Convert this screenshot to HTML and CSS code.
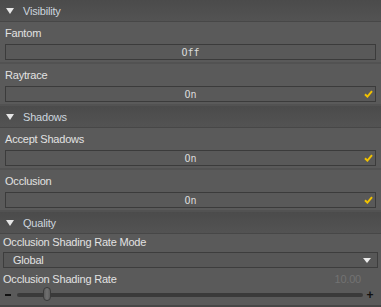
FILE: index.html
```html
<!DOCTYPE html>
<html lang="en">
<head>
    <meta charset="UTF-8">
    <meta name="viewport" content="width=device-width, initial-scale=1.0">
    <title>Surface Properties</title>
    <link rel="stylesheet" href="styles.css">
</head>
<body>
    <div class="panel">
        <div class="group-head"><span class="caret"></span>Visibility</div>
        <div class="prop">
            <div class="prop-label">Fantom</div>
            <div class="toggle">Off</div>
        </div>
        <div class="prop">
            <div class="prop-label">Raytrace</div>
            <div class="toggle">On
                <svg class="check" width="9" height="8" viewBox="0 0 9 8"><path d="M1 4.2 L3.4 6.6 L8 1.2" /></svg>
            </div>
        </div>

        <div class="group-head"><span class="caret"></span>Shadows</div>
        <div class="prop">
            <div class="prop-label">Accept Shadows</div>
            <div class="toggle">On
                <svg class="check" width="9" height="8" viewBox="0 0 9 8"><path d="M1 4.2 L3.4 6.6 L8 1.2" /></svg>
            </div>
        </div>
        <div class="prop">
            <div class="prop-label">Occlusion</div>
            <div class="toggle">On
                <svg class="check" width="9" height="8" viewBox="0 0 9 8"><path d="M1 4.2 L3.4 6.6 L8 1.2" /></svg>
            </div>
        </div>

        <div class="group-head"><span class="caret"></span>Quality</div>
        <div class="quality">
            <div class="prop-label">Occlusion Shading Rate Mode</div>
            <div class="select">Global<span class="select-arrow"></span></div>
            <div class="rate-head">
                <span class="prop-label">Occlusion Shading Rate</span>
                <span class="rate-value">10.00</span>
            </div>
            <div class="slider">
                <span class="minus"></span>
                <div class="track">
                    <div class="thumb"></div>
                </div>
                <span class="plus">+</span>
            </div>
        </div>
    </div>
</body>
</html>
```

FILE: styles.css
```css
/* Base */
body {
    margin: 0;
    background: #5a5a5a;
    font-family: 'Liberation Sans', Arial, sans-serif;
    font-size: 11px;
    letter-spacing: -0.2px;
    color: #e2e2e2;
    overflow: hidden;
}

.panel {
    width: 381px;
    height: 307px;
    display: flex;
    flex-direction: column;
    box-sizing: border-box;
    border-bottom: 2px solid #464646;
}

/* Group headers */
.group-head {
    height: 22px;
    display: flex;
    align-items: center;
    padding-left: 6px;
    background: linear-gradient(#4b4b4b, #535353);
    border-bottom: 1px solid #474747;
    box-sizing: border-box;
    color: #cdd5de;
}

.caret {
    width: 0;
    height: 0;
    border-left: 4px solid transparent;
    border-right: 4px solid transparent;
    border-top: 6px solid #e6e6e6;
    margin-right: 9px;
    margin-top: 1px;
}

/* Property rows */
.prop {
    height: 42px;
    box-sizing: border-box;
    padding: 4px 5px 0;
    border-bottom: 2px solid #525252;
}

.prop-label {
    line-height: 14px;
}

.toggle {
    position: relative;
    margin-top: 4px;
    height: 16px;
    box-sizing: border-box;
    border: 1px solid #3b3b3b;
    background: #595959;
    display: flex;
    align-items: center;
    justify-content: center;
    font-family: 'DejaVu Sans Mono', monospace;
    font-size: 10px;
    letter-spacing: 0;
    color: #dcdcdc;
}

.check {
    position: absolute;
    right: 2px;
    top: 3px;
}

.check path {
    fill: none;
    stroke: #f2c200;
    stroke-width: 2;
}

/* Quality block */
.quality {
    flex: 1;
    padding: 1px 3px 0;
    display: flex;
    flex-direction: column;
}

.select {
    position: relative;
    margin-top: 3px;
    height: 16px;
    box-sizing: border-box;
    border: 1px solid #3d3d3d;
    background: #575757;
    display: flex;
    align-items: center;
    padding-left: 9px;
    color: #e2e2e2;
}

.select-arrow {
    position: absolute;
    right: 6px;
    top: 5px;
    border-left: 4px solid transparent;
    border-right: 4px solid transparent;
    border-top: 5px solid #ececec;
}

.rate-head {
    margin-top: 4px;
    display: flex;
    justify-content: space-between;
    line-height: 14px;
}

.rate-value {
    color: #727272;
    font-size: 11px;
    margin-right: 17px;
}

.slider {
    height: 18px;
    display: flex;
    align-items: center;
}

.minus {
    width: 6px;
    height: 2px;
    background: #111;
    margin-left: 2px;
    margin-right: 6px;
}

.track {
    position: relative;
    flex: 1;
    height: 4px;
    border-radius: 2px;
    background: #3a3a3a;
}

.thumb {
    position: absolute;
    left: 26px;
    top: -6px;
    width: 8px;
    height: 14px;
    box-sizing: border-box;
    border: 1px solid #3a3a3a;
    border-radius: 4px;
    background: linear-gradient(90deg, #5c5c5c, #707070 50%, #5c5c5c);
}

.plus {
    width: 12px;
    text-align: center;
    font-weight: bold;
    font-size: 12px;
    color: #111;
    margin-left: 1px;
    margin-right: 2px;
}
```
